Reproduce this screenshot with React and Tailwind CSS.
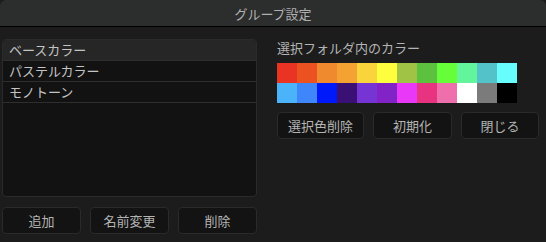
import React from "react";

const swatches = [
  "#ea3323", "#ec5122", "#f08a2f", "#f4a332", "#f9d43b", "#fefe3f",
  "#a1c345", "#5bc13f", "#66fd39", "#63f59c", "#53c3c9", "#67fdfd",
  "#4bb3fa", "#3e86f9", "#0019fb", "#3b1074", "#7734d5", "#8223c7",
  "#e938f8", "#e83381", "#ee6fab", "#ffffff", "#7b7b7b", "#000000",
];

const groups = ["ベースカラー", "パステルカラー", "モノトーン"];

function Btn({ children, className = "" }) {
  return (
    <button className={`h-[27px] rounded-[4px] border border-[#2a2a2a] bg-[#131313] text-[13px] text-[#b4b4b4] ${className}`}>
      {children}
    </button>
  );
}

export default function App() {
  return (
    <div
      className="w-[546px] h-[242px] bg-[#1c1c1c] overflow-hidden"
      style={{ fontFamily: '"Noto Sans CJK JP", "Noto Sans", sans-serif' }}
    >
      <div className="h-[27px] bg-[#2c2d2d] border-b border-black flex items-center justify-center rounded-t-[6px]">
        <span className="text-[13px] text-[#b0b0b0] leading-none">グループ設定</span>
      </div>

      <div className="flex pt-[12px] pl-[2px]">
        <div className="w-[255px] flex flex-col">
          <div className="h-[158px] rounded-[4px] border border-[#2a2a2a] bg-[#121212] overflow-hidden">
            {groups.map((g, i) => (
              <div
                key={g}
                className={`h-[21px] border-b border-[#2e2e2e] pl-[6px] flex items-center text-[13px] text-[#c4c4c4] ${i === 0 ? "bg-[#262626]" : ""}`}
              >
                {g}
              </div>
            ))}
          </div>
          <div className="mt-[10px] flex gap-[9px]">
            <Btn className="w-[79px]">追加</Btn>
            <Btn className="w-[79px]">名前変更</Btn>
            <Btn className="w-[79px]">削除</Btn>
          </div>
        </div>

        <div className="ml-[20px] flex flex-col">
          <div className="h-[16px] mt-[1px] flex items-center text-[13px] text-[#b4b4b4]">選択フォルダ内のカラー</div>
          <div className="mt-[7px] grid grid-cols-[repeat(12,20px)] grid-rows-[repeat(2,20px)]">
            {swatches.map((c, i) => (
              <div key={i} style={{ backgroundColor: c }} />
            ))}
          </div>
          <div className="mt-[9px] flex gap-[9px]">
            <Btn className="w-[87px]">選択色削除</Btn>
            <Btn className="w-[79px]">初期化</Btn>
            <Btn className="w-[78px]">閉じる</Btn>
          </div>
        </div>
      </div>
    </div>
  );
}
